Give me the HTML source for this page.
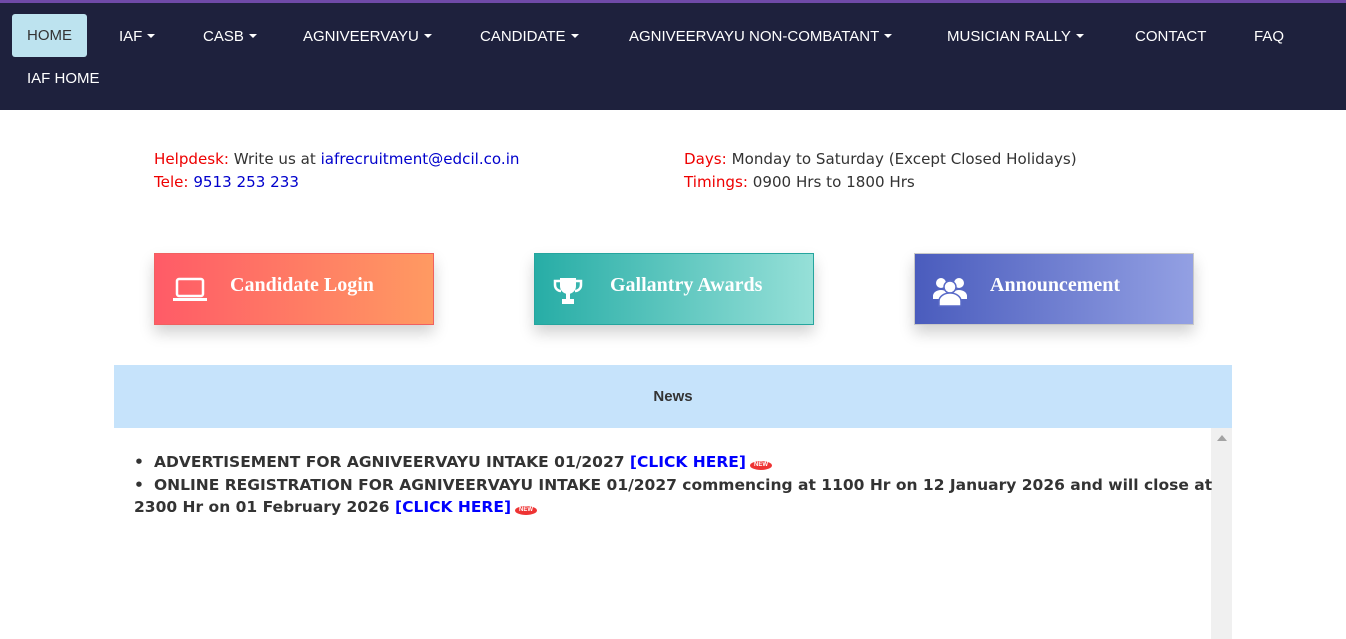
<!DOCTYPE html>
<html><head><meta charset="utf-8"><style>
*{margin:0;padding:0;box-sizing:border-box}
body{width:1346px;height:639px;overflow:hidden;background:#fff;font-family:"Liberation Sans",sans-serif;position:relative}
.nav{position:absolute;left:0;top:0;width:1346px;height:110px;background:#1e213d;border-top:3px solid #6f4aa8}
.nav a{position:absolute;color:#fff;font-size:15px;white-space:nowrap;top:25px}
.nav a.c:after{content:"";display:inline-block;margin-left:5px;vertical-align:3px;border-left:4px solid transparent;border-right:4px solid transparent;border-top:4px solid #fff}
.home{left:12px;top:11px!important;width:75px;height:43px;background:#bde3ef;border-radius:3px;color:#333!important;text-align:center;line-height:43px}
.info{position:absolute;font-family:"DejaVu Sans",sans-serif;font-size:15.1px;color:#333;white-space:nowrap}
.r{color:#e00}.b{color:#00c}
.btn{position:absolute;top:253px;width:280px;height:72px;box-shadow:0 8px 14px rgba(0,0,0,.18);color:#fff;font-family:"Liberation Serif",serif;font-weight:bold;font-size:20px}
.btn span{position:absolute;left:75px;top:20px}
.btn svg{position:absolute;left:18px;top:22px}
.news{position:absolute;left:114px;top:365px;width:1118px;height:63px;background:#c6e3fb;text-align:center;line-height:63px;font-weight:bold;font-size:15px;color:#333}
.sb{position:absolute;left:1211px;top:428px;width:21px;height:211px;background:#f0f0f0}
.sb:before{content:"";position:absolute;left:6px;top:7px;border-left:5px solid transparent;border-right:5px solid transparent;border-bottom:6px solid #a3a3a3}
.items{position:absolute;left:134px;top:451px;width:1092px;font-family:"DejaVu Sans",sans-serif;font-weight:bold;font-size:15.5px;color:#333;line-height:22.5px}
.items a{color:#00f}
.bl{display:inline-block;width:20px}
.new{display:inline-block;background:#e33;color:#fff;font-size:6px;line-height:9px;height:9px;border-radius:50%;padding:0 4px;vertical-align:1px;margin-left:4px;font-family:"Liberation Sans",sans-serif}
</style></head><body>
<div class="nav">
<a class="home">HOME</a>
<a class="c" style="left:119px">IAF</a>
<a class="c" style="left:203px">CASB</a>
<a class="c" style="left:303px">AGNIVEERVAYU</a>
<a class="c" style="left:480px">CANDIDATE</a>
<a class="c" style="left:629px">AGNIVEERVAYU NON-COMBATANT</a>
<a class="c" style="left:947px">MUSICIAN RALLY</a>
<a style="left:1135px">CONTACT</a>
<a style="left:1254px">FAQ</a>
<a style="left:27px;top:67px">IAF HOME</a>
</div>
<div class="info" style="left:154px;top:150px"><span class="r">Helpdesk:</span> Write us at <span class="b">iafrecruitment@edcil.co.in</span></div>
<div class="info" style="left:154px;top:173px"><span class="r">Tele:</span> <span class="b">9513 253 233</span></div>
<div class="info" style="left:684px;top:150px"><span class="r">Days:</span> Monday to Saturday (Except Closed Holidays)</div>
<div class="info" style="left:684px;top:173px"><span class="r">Timings:</span> 0900 Hrs to 1800 Hrs</div>
<div class="btn" style="left:154px;background:linear-gradient(90deg,#ff5b67,#ff9a62);border:1px solid #f06060"><svg width="36" height="28" viewBox="0 0 36 28"><rect x="4" y="3" width="26" height="17" rx="2" fill="none" stroke="#fff" stroke-width="2.5"/><rect x="0" y="22" width="34" height="3" fill="#fff"/></svg><span>Candidate Login</span></div>
<div class="btn" style="left:534px;background:linear-gradient(90deg,#27ada6,#96e0d8);border:1px solid #25a59e"><svg width="30" height="30" viewBox="0 0 30 30"><path d="M7 2h16v8a8 8 0 0 1-16 0z" fill="#fff"/><path d="M7 5H2v4a6 6 0 0 0 6 6M23 5h5v4a6 6 0 0 1-6 6" fill="none" stroke="#fff" stroke-width="2.5"/><rect x="13" y="17" width="4" height="6" fill="#fff"/><rect x="9" y="23" width="12" height="5" fill="#fff"/></svg><span>Gallantry Awards</span></div>
<div class="btn" style="left:914px;background:linear-gradient(90deg,#4a5cbd,#93a0e3);border:1px solid #c8c8c8"><svg width="34" height="32" viewBox="0 0 34 32"><circle cx="8" cy="7" r="5" fill="#fff"/><circle cx="26" cy="7" r="5" fill="#fff"/><path d="M0 20a8 6 0 0 1 16 0v3H0zM18 20a8 6 0 0 1 16 0v3H18z" fill="#fff"/><circle cx="17" cy="11" r="6" fill="#fff" stroke="#5a6bc8" stroke-width="1.5"/><path d="M6 30v-5a11 8 0 0 1 22 0v5z" fill="#fff" stroke="#5a6bc8" stroke-width="1.5"/></svg><span>Announcement</span></div>
<div class="news">News</div>
<div class="sb"></div>
<div class="items">
<div><span class="bl">•</span>ADVERTISEMENT FOR AGNIVEERVAYU INTAKE 01/2027 <a>[CLICK HERE]</a><span class="new">NEW</span></div>
<div><span class="bl">•</span>ONLINE REGISTRATION FOR AGNIVEERVAYU INTAKE 01/2027 commencing at 1100 Hr on 12 January 2026 and will close at 2300 Hr on 01 February 2026 <a>[CLICK HERE]</a><span class="new">NEW</span></div>
</div>
</body></html>
